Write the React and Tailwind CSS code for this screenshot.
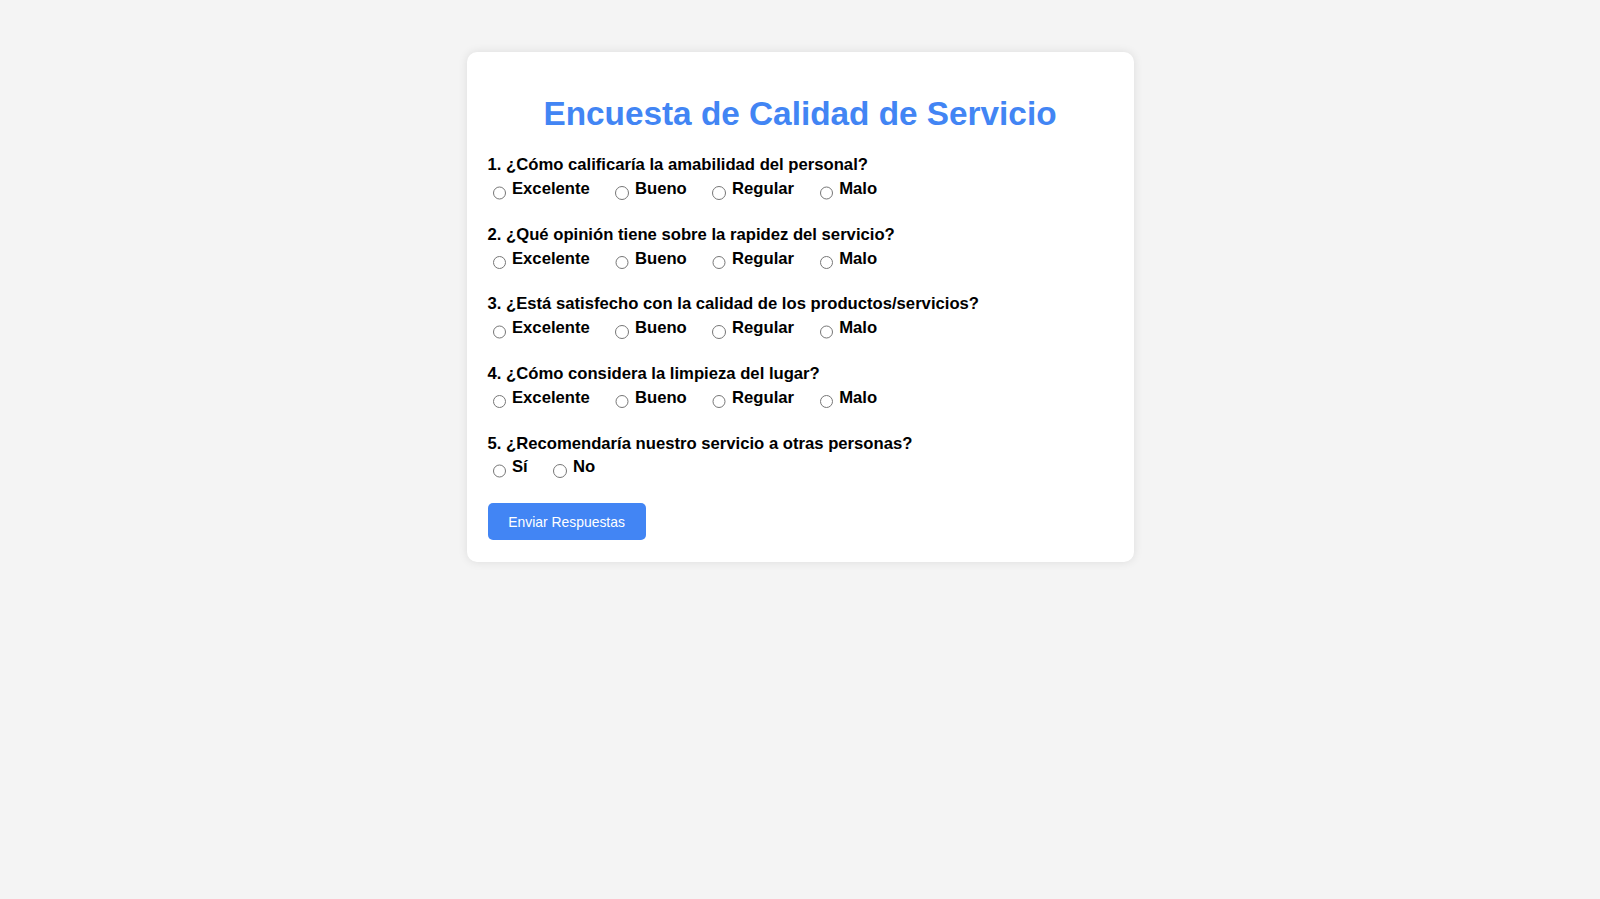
import React, { useState } from "react";

const QUESTIONS = [
  { id: "q1", text: "1. ¿Cómo calificaría la amabilidad del personal?", options: ["Excelente", "Bueno", "Regular", "Malo"] },
  { id: "q2", text: "2. ¿Qué opinión tiene sobre la rapidez del servicio?", options: ["Excelente", "Bueno", "Regular", "Malo"] },
  { id: "q3", text: "3. ¿Está satisfecho con la calidad de los productos/servicios?", options: ["Excelente", "Bueno", "Regular", "Malo"] },
  { id: "q4", text: "4. ¿Cómo considera la limpieza del lugar?", options: ["Excelente", "Bueno", "Regular", "Malo"] },
  { id: "q5", text: "5. ¿Recomendaría nuestro servicio a otras personas?", options: ["Sí", "No"] },
];

export default function App() {
  const [answers, setAnswers] = useState({});

  const handleSubmit = (e) => {
    e.preventDefault();
  };

  return (
    <div className="min-h-screen bg-[#f4f4f4] pt-[52px] font-['Liberation_Sans',Arial,sans-serif] text-black">
      <form
        onSubmit={handleSubmit}
        className="mx-auto w-[667px] bg-white rounded-[10px] shadow-[0_0_10px_rgba(0,0,0,0.1)] px-[21px] pt-[21px] pb-[21.5px]"
      >
        <h1 className="text-center text-[#4285f4] font-bold text-[33.33px] leading-[normal] mt-[21.5px] mb-[22.8px]">
          Encuesta de Calidad de Servicio
        </h1>

        {QUESTIONS.map((q) => (
          <div key={q.id} className="mb-[25.8px]">
            {/* pregunta */}
            <p className="font-bold text-[16.67px] leading-[normal]">{q.text}</p>
            <div className="flex mt-[3.8px] h-[20px]">
              {q.options.map((opt) => (
                <label key={opt} className="flex items-start mr-[20.7px] cursor-pointer">
                  <input
                    type="radio"
                    name={q.id}
                    value={opt}
                    checked={answers[q.id] === opt}
                    onChange={() => setAnswers({ ...answers, [q.id]: opt })}
                    className="ml-[5px] mt-[7px] w-[13.5px] h-[13.5px] shrink-0"
                  />
                  <span className="ml-[6px] font-bold text-[16.67px] leading-[normal]">{opt}</span>
                </label>
              ))}
            </div>
          </div>
        ))}

        <button
          type="submit"
          className="bg-[#4285f4] text-white text-[13.9px] leading-[normal] px-[20.8px] py-[10.4px] rounded-[5px] cursor-pointer"
        >
          Enviar Respuestas
        </button>
      </form>
    </div>
  );
}
